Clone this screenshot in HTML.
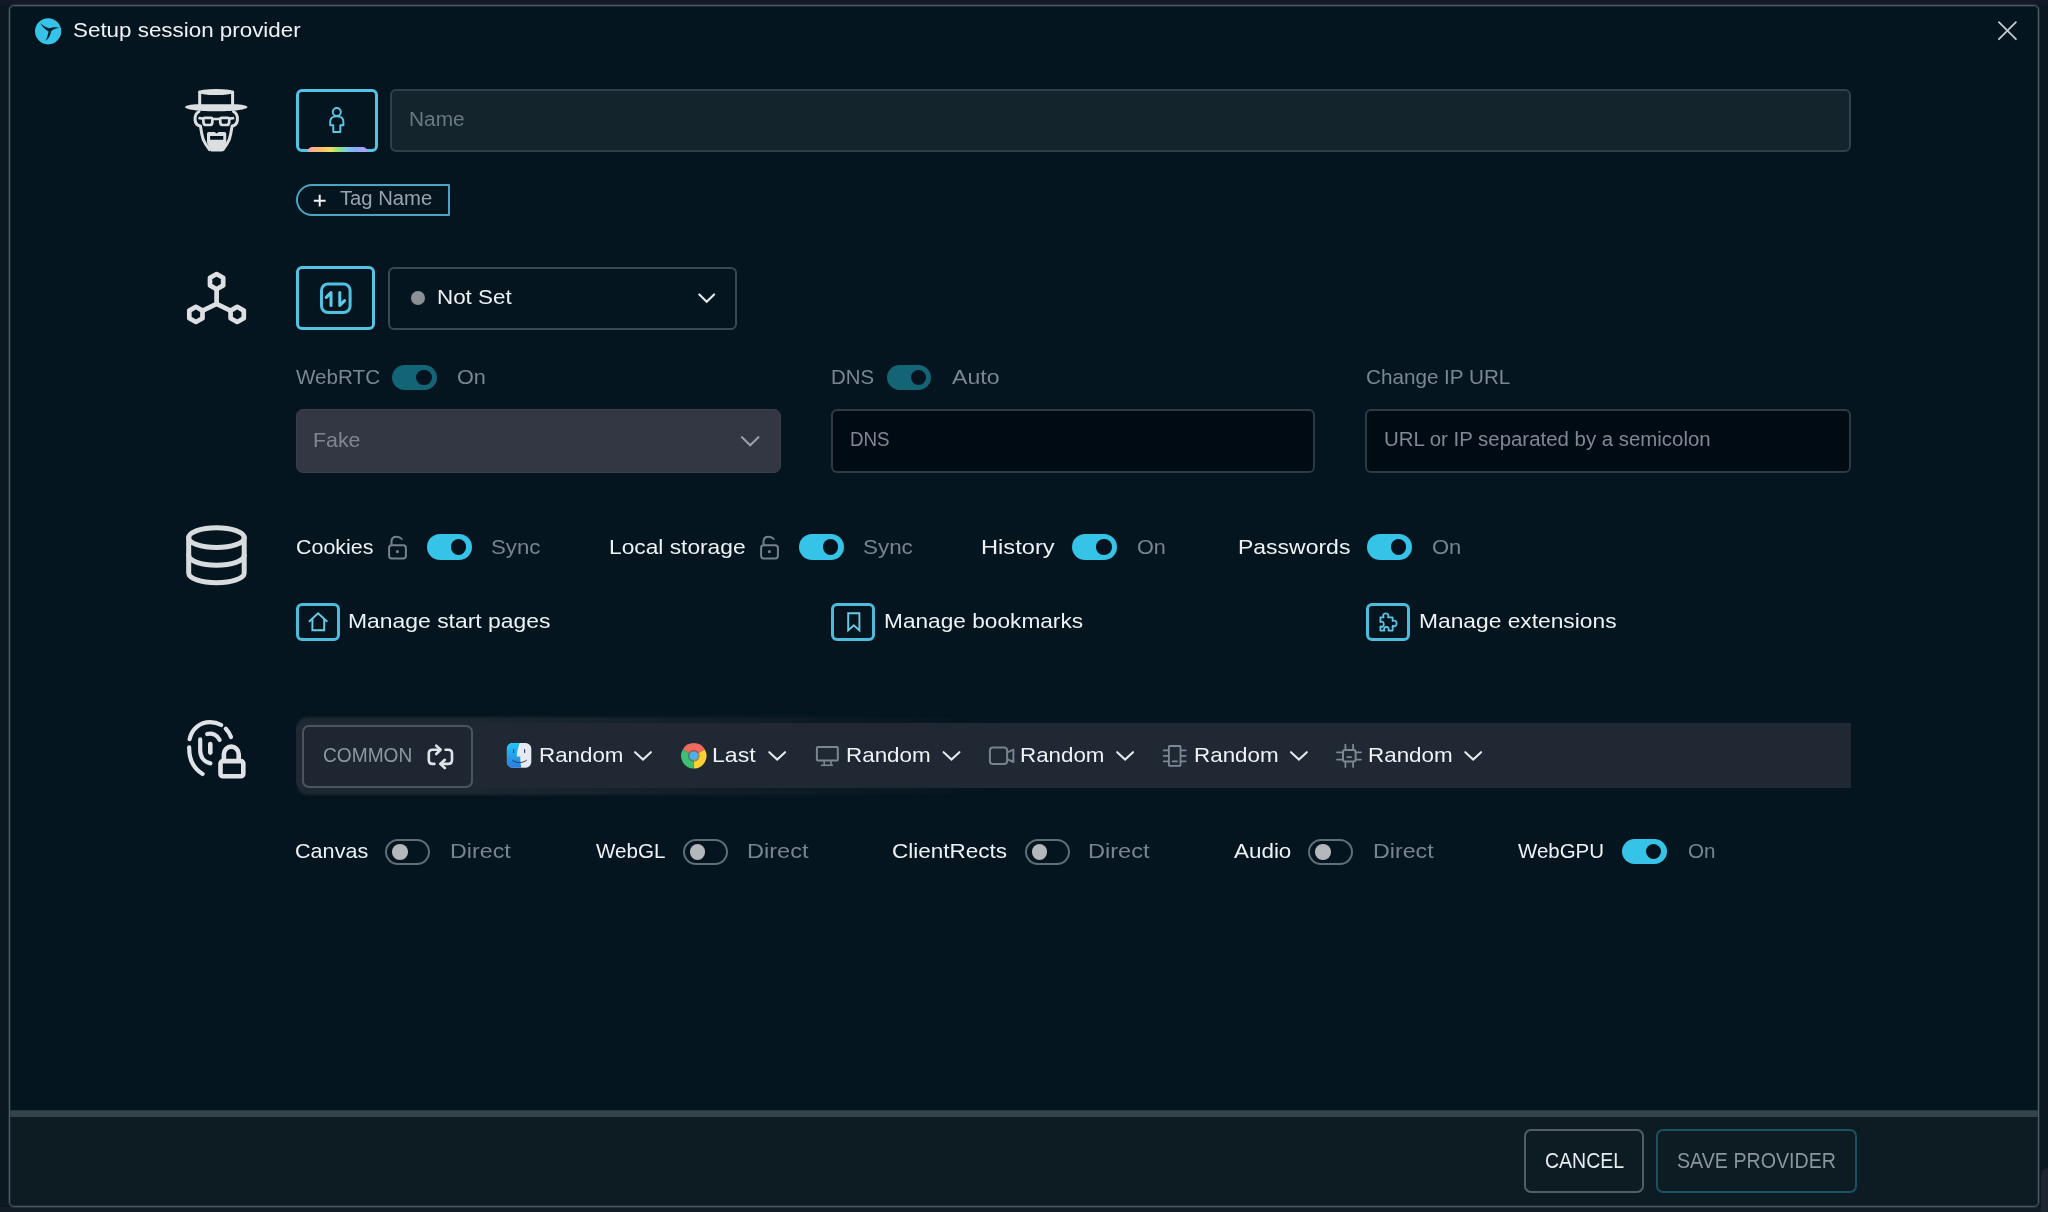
<!DOCTYPE html>
<html lang="en"><head><meta charset="utf-8"><title>Setup session provider</title>
<style>
*{box-sizing:border-box;margin:0;padding:0}
html,body{width:2048px;height:1212px;overflow:hidden}
body{position:relative;background:#0b1821;font-family:"Liberation Sans",sans-serif;-webkit-font-smoothing:antialiased}
.a{position:absolute}
.t{position:absolute;white-space:nowrap;transform-origin:0 0;font-family:"Liberation Sans",sans-serif}
svg{position:absolute;overflow:visible}
#topstrip{left:0;top:0;width:2048px;height:5px;background:#131927}
#botstrip{left:0;top:1207px;width:2048px;height:5px;background:#121c26}
#rb{left:2041px;top:1168px;width:7px;height:44px;background:#1b2630;border-radius:7px 0 0 0}
#dialog{left:9px;top:5px;width:2030px;height:1202px;border:1px solid #4b5961;border-radius:5px;background:#05151f;box-shadow:0 0 0 1px rgba(75,89,97,.33),inset 0 0 0 1px rgba(75,89,97,.3)}
#sep{left:10px;top:1111px;width:2028px;height:6px;background:#35444b;box-shadow:0 -1px 0 #273640}
#foot{left:11px;top:1117px;width:2026px;height:88px;background:#0d1b22;border-radius:0 0 3px 3px}
.ibtn{border:3px solid #53c4e3;border-radius:6px;background:#05151f}
.sbtn{border:3px solid #4cbbdc;border-radius:6px;width:44.4px;height:38px;top:602.8px}
.inp{border:2px solid #2f404a;border-radius:6px}
.tg{width:45px;height:25.6px;border-radius:13px}
.tg i{position:absolute;display:block;border-radius:50%}
.tg.on{background:#35c4e8}
.tg.on i,.tg.dim i{width:15.4px;height:15.4px;left:24.1px;top:5.1px;background:#04131e}
.tg.dim{background:#136474;width:44.5px}
.tg.off{border:2px solid #606e78;height:26px}
.tg.off i{width:15.6px;height:15.6px;left:5px;top:3.2px;background:#b4b7bb}
.btn{border-radius:7px;top:1129.3px;height:63.6px}
#root{position:absolute;left:0;top:0;width:2048px;height:1212px;will-change:transform}

</style></head>
<body>
<div id="root">
<div class="a" id="topstrip"></div>
<div class="a" id="botstrip"></div>
<div class="a" id="rb"></div>
<div class="a" id="dialog"></div>
<div class="a" id="sep"></div>
<div class="a" id="foot"></div>

<!-- logo -->
<svg style="left:34px;top:17px" width="28" height="28" viewBox="0 0 28 28">
  <circle cx="14.1" cy="14.3" r="13.1" fill="#36c3e7"/>
  <path d="M14.6 14.4 C11.5 12.8 8.6 10 6.3 6.2 C9.2 8.6 12.4 10.6 15.2 11.2 C18.6 10 22 9.8 25.6 10.8 C22 11.2 19 12.4 17 14.6 C16.6 18.4 14.8 21.8 11.4 24 C13.2 20.8 13.8 17.6 14.6 14.4 Z" fill="#07202e"/>
</svg>
<!-- close -->
<svg style="left:1997px;top:20px" width="21" height="21" viewBox="1997 20 21 21">
  <path d="M1998.9 22.2 L2015.9 39.2 M2015.9 22.2 L1998.9 39.2" stroke="#c3cbd0" stroke-width="1.8" stroke-linecap="round" fill="none"/>
</svg>

<!-- row 1 -->
<div class="a ibtn" style="left:296px;top:88.6px;width:82.4px;height:63.7px"></div>
<div class="a" style="left:308px;top:146.8px;width:59.4px;height:5.5px;border-radius:5px 5px 2px 2px/5px 5px 1px 1px;background:linear-gradient(90deg,#f6a7a3 0%,#f7c06a 22%,#f2dd5c 38%,#8fe27f 52%,#7ccbe8 66%,#83aef8 80%,#b8a0f6 100%)"></div>
<div class="a inp" style="left:390.2px;top:88.8px;width:1460.8px;height:63.4px;background:#14242d"></div>
<div class="a" style="left:296.1px;top:184.1px;width:154px;height:31.6px;border:2px solid #4aa5c5;border-radius:16px 1px 1px 16px"></div>
<svg style="left:313px;top:194px" width="14" height="14" viewBox="0 0 14 14"><path d="M6.7 0.8 V12.6 M0.8 6.7 H12.6" stroke="#f0f4f6" stroke-width="2" fill="none"/></svg>

<!-- row 2 -->
<div class="a ibtn" style="left:295.8px;top:266px;width:79.6px;height:63.8px;border-radius:6px"></div>
<div class="a inp" style="left:387.6px;top:266.6px;width:349.4px;height:63.2px;border-color:#3a4951"></div>
<div class="a" style="left:411px;top:291.4px;width:13.8px;height:13.8px;border-radius:50%;background:#8b9097"></div>

<!-- row 3 -->
<div class="a tg dim" style="left:392.4px;top:364.7px"><i></i></div>
<div class="a tg dim" style="left:886.8px;top:364.7px"><i></i></div>
<div class="a" style="left:296px;top:409px;width:484.8px;height:64px;background:#333743;border:1px solid #3a3f4b;border-radius:7px"></div>
<div class="a inp" style="left:831.2px;top:409px;width:484px;height:64.2px;background:#010b14;border-color:#2c3b45"></div>
<div class="a inp" style="left:1365.2px;top:409px;width:485.6px;height:64.2px;background:#010b14;border-color:#2c3b45"></div>

<!-- row 4 -->
<div class="a tg on" style="left:427px;top:534.4px"><i></i></div>
<div class="a tg on" style="left:799px;top:534.4px"><i></i></div>
<div class="a tg on" style="left:1072.4px;top:534.4px"><i></i></div>
<div class="a tg on" style="left:1367px;top:534.4px"><i></i></div>
<div class="a sbtn" style="left:295.8px"></div>
<div class="a sbtn" style="left:831.1px"></div>
<div class="a sbtn" style="left:1365.9px"></div>

<!-- toolbar -->
<div class="a" style="left:296.5px;top:717.3px;width:700px;height:78px;border-radius:10px 0 0 10px;filter:blur(1.2px);background:linear-gradient(90deg,#1d2730 0%,#1d2730 26%,rgba(29,39,48,0) 100%)"></div>
<div class="a" style="left:296px;top:722.8px;width:1555px;height:65.4px;background:#1f2833;border-radius:6px 0 0 6px"></div>
<div class="a" style="left:302.2px;top:724.8px;width:171px;height:63.6px;border:2px solid #4b555e;border-radius:7px;background:#1e2731"></div>

<!-- row 6 -->
<div class="a tg off" style="left:385.1px;top:838.9px"><i></i></div>
<div class="a tg off" style="left:682.7px;top:838.9px"><i></i></div>
<div class="a tg off" style="left:1024.5px;top:838.9px"><i></i></div>
<div class="a tg off" style="left:1308.3px;top:838.9px"><i></i></div>
<div class="a tg on" style="left:1621.8px;top:838.8px"><i></i></div>

<!-- footer buttons -->
<div class="a btn" style="left:1523.8px;width:120.6px;border:2px solid #535d63"></div>
<div class="a btn" style="left:1656.4px;width:201px;border:2px solid #195264"></div>

<!--ICONS_START-->
<!-- heisenberg -->
<svg style="left:176px;top:80px" width="80" height="80" viewBox="0 0 80 80">
  <g fill="none" stroke="#dcdfe1" stroke-width="3" stroke-linejoin="round" stroke-linecap="round">
    <path d="M23.7 25 V12 M56.6 25 V12"/>
    <path d="M23 31.5 C20.2 33 18.8 36.5 19.1 40 C19.4 43.6 21.6 45.6 24.4 46 L25.8 54 C26.4 58 27.6 61 29.6 64 L33.5 69.6"/>
    <path d="M57.5 31.5 C60.3 33 61.7 36.5 61.4 40 C61.1 43.6 58.9 45.6 56.1 46 L54.7 54 C54.1 58 52.9 61 50.9 64 L47 69.6"/>
  </g>
  <ellipse cx="40.15" cy="12" rx="18" ry="3.1" fill="#dcdfe1"/>
  <path d="M8.9 27 C9.8 24.7 18 24.2 25 24.2 L55.5 24.2 C62.5 24.2 70.7 24.7 71.6 27 C70.2 30.3 54 31.3 40.2 31.3 C26.4 31.3 10.3 30.3 8.9 27 Z" fill="#dcdfe1"/>
  <g fill="none" stroke="#dcdfe1" stroke-width="2.7" stroke-linejoin="round">
    <path d="M28.9 37.8 H35 Q36.5 37.8 36.4 39.3 L36.3 42.6 Q36.2 45 33.8 45 H30.2 Q27.6 45 27.5 42.6 L27.3 39.3 Q27.3 37.8 28.9 37.8 Z"/>
    <path d="M51.7 37.8 H45.6 Q44.1 37.8 44.2 39.3 L44.3 42.6 Q44.4 45 46.8 45 H50.4 Q53 45 53.1 42.6 L53.3 39.3 Q53.3 37.8 51.7 37.8 Z"/>
    <path d="M36.4 39 H44.2 M27.3 38.6 L22.4 38 M53.3 38.6 L58.2 38"/>
  </g>
  <path fill-rule="evenodd" fill="#dcdfe1" d="M31 53.6 Q31 52 32.8 52 L38.6 52 L40.6 53.4 L42.6 52 L48.4 52 Q50.2 52 50.2 53.6 L50.2 62.4 L46.4 71.4 L34.9 71.4 L31 62.4 Z M34.1 56 L34.1 59.8 L47.3 59.8 L47.3 56 Z"/>
</svg>
<!-- person -->
<svg style="left:320px;top:100px" width="36" height="40" viewBox="320 100 36 40">
  <g fill="none" stroke="#5cc7e6" stroke-width="1.9" stroke-linejoin="round">
    <circle cx="336.8" cy="112" r="4"/>
    <path d="M330.2 125.2 V121.6 C330.2 118.2 333 116.4 336.8 116.4 C340.6 116.4 343.4 118.2 343.4 121.6 V125.2 H340.3 V132 H333.3 V125.2 Z"/>
  </g>
</svg>
<!-- network -->
<svg style="left:176px;top:258px" width="80" height="80" viewBox="176 258 80 80">
  <g fill="none" stroke="#dde0e3" stroke-width="4.7" stroke-linejoin="round" stroke-linecap="round">
    <path d="M216.6 274 L223.2 277.8 V285.4 L216.6 289.2 L210 285.4 V277.8 Z"/>
    <path d="M195.9 306.8 L202.5 310.6 V318.2 L195.9 322 L189.3 318.2 V310.6 Z"/>
    <path d="M237.2 306.8 L243.8 310.6 V318.2 L237.2 322 L230.6 318.2 V310.6 Z"/>
    <path d="M216.6 289.4 V303.8 L202.7 310.6 M216.6 303.8 L230.4 310.6"/>
  </g>
</svg>
<!-- arrows in rounded square -->
<svg style="left:316px;top:278px" width="40" height="40" viewBox="316 278 40 40">
  <rect x="321.5" y="284" width="28.6" height="28.5" rx="6.5" fill="none" stroke="#4fc2e2" stroke-width="3"/>
  <g fill="none" stroke="#5ccbea" stroke-width="3" stroke-linecap="round" stroke-linejoin="round">
    <path d="M326.2 297.4 L331 292.6 V305.4"/>
    <path d="M339.8 292.6 V305.4 L344.6 300.6"/>
  </g>
</svg>
<!-- chevrons -->
<svg style="left:0;top:0" width="2048" height="1212" viewBox="0 0 2048 1212">
  <g fill="none" stroke="#e4e9ed" stroke-width="2.1" stroke-linecap="round" stroke-linejoin="miter">
    <path d="M699.3 294.4 L706.7 301.8 L714.1 294.4"/>
    <path d="M635.1 752.2 L643 759.6 L650.9 752.2"/>
    <path d="M769.3 752.2 L777.2 759.6 L785.1 752.2"/>
    <path d="M943.6 752.2 L951.5 759.6 L959.4 752.2"/>
    <path d="M1117.2 752.2 L1125.1 759.6 L1133 752.2"/>
    <path d="M1291 752.2 L1298.9 759.6 L1306.8 752.2"/>
    <path d="M1465.3 752.2 L1473.2 759.6 L1481.1 752.2"/>
  </g>
  <path d="M742 437.2 L750.2 445.2 L758.4 437.2" fill="none" stroke="#9aa0a8" stroke-width="2.1" stroke-linecap="round"/>
</svg>
<!-- database -->
<svg style="left:176px;top:510px" width="80" height="84" viewBox="176 510 80 84">
  <g fill="none" stroke="#d9dcdf" stroke-width="5" stroke-linecap="round">
    <ellipse cx="216.45" cy="537.7" rx="27.75" ry="9.9"/>
    <path d="M188.7 537.7 V572.9 A27.75 9.9 0 0 0 244.2 572.9 V537.7"/>
    <path d="M188.7 555.3 A27.75 9.9 0 0 0 244.2 555.3"/>
  </g>
</svg>
<!-- locks -->
<svg style="left:380px;top:528px" width="40" height="40" viewBox="0 0 40 40">
  <g id="ulock" fill="none" stroke="#74818b" stroke-width="2" stroke-linecap="round">
    <rect x="9.1" y="17.3" width="16.8" height="13.1" rx="2.6"/>
    <path d="M11.5 17 V13.6 C11.5 10.6 13.6 8.7 16.6 8.7 C18.9 8.7 20.7 9.6 21.8 11"/>
    <circle cx="17.4" cy="23.6" r="0.9" fill="#9aa6ae" stroke-width="1.4"/>
  </g>
</svg>
<svg style="left:751.6px;top:528px" width="40" height="40" viewBox="0 0 40 40">
  <g fill="none" stroke="#74818b" stroke-width="2" stroke-linecap="round">
    <rect x="9.1" y="17.3" width="16.8" height="13.1" rx="2.6"/>
    <path d="M11.5 17 V13.6 C11.5 10.6 13.6 8.7 16.6 8.7 C18.9 8.7 20.7 9.6 21.8 11"/>
    <circle cx="17.4" cy="23.6" r="0.9" fill="#9aa6ae" stroke-width="1.4"/>
  </g>
</svg>
<!-- home / bookmark / puzzle -->
<svg style="left:300px;top:606px" width="36" height="32" viewBox="300 606 36 32">
  <g fill="none" stroke="#6ccbe4" stroke-width="1.9" stroke-linejoin="miter" stroke-linecap="butt">
    <path d="M308.9 621.8 L318.1 613.2 L327.3 621.8"/>
    <path d="M312.4 619 V630.2 H324.2 V619"/>
  </g>
</svg>
<svg style="left:836px;top:606px" width="36" height="32" viewBox="836 606 36 32">
  <path d="M848.2 613.2 H859.4 V630.4 L853.8 625.2 L848.2 630.4 Z" fill="none" stroke="#6ccbe4" stroke-width="1.9" stroke-linejoin="miter"/>
</svg>
<svg style="left:1370px;top:606px" width="36" height="32" viewBox="1370 606 36 32">
  <path d="M1380.4 617.4 H1383.6 C1382.4 615 1383.6 613.3 1385.8 613.3 C1388 613.3 1389.2 615 1388 617.4 H1392.6 V621 C1395 619.8 1396.6 621.2 1396.6 623.4 C1396.6 625.6 1395 627 1392.6 625.8 V630.6 H1388.4 C1389.4 628.6 1388.2 627 1386.4 627 C1384.6 627 1383.4 628.6 1384.4 630.6 H1380.4 V626.4 C1382.4 627.4 1383.8 626.2 1383.8 624.2 C1383.8 622.2 1382.4 621 1380.4 622 Z" fill="none" stroke="#5cc3e0" stroke-width="1.8" stroke-linejoin="round"/>
</svg>
<!-- fingerprint + lock -->
<svg style="left:176px;top:710px" width="80" height="80" viewBox="0 0 80 80">
  <g fill="none" stroke="#dfe3e7" stroke-width="4.2" stroke-linecap="round">
    <path d="M13.6 29.2 C15.6 19 24 12.2 34 12.2 C38.2 12.2 42 13.2 45.2 15"/>
    <path d="M49.8 18.8 C52 21 53.8 23.8 55 27"/>
    <path d="M13.2 37.4 C13 49 17.6 58.4 26.6 64"/>
    <path d="M24.2 29.4 V40 C24.2 47 28 52 34.4 53.4"/>
    <path d="M31.2 24 C36.4 22.6 41.4 25.2 43.6 29.8"/>
    <path d="M34.3 34 V42.6" stroke-width="4.6"/>
  </g>
  <g fill="none" stroke="#05151f" stroke-width="9.4" stroke-linejoin="round">
    <rect x="44.5" y="51.1" width="22.8" height="15.2" rx="2.4"/>
    <path d="M47.9 50 V44 A7.4 7.4 0 0 1 62.7 44 V50"/>
  </g>
  <g fill="none" stroke="#dfe3e7" stroke-width="4.6" stroke-linejoin="round">
    <rect x="44.5" y="51.1" width="22.8" height="15.2" rx="2.4" fill="#05151f"/>
    <path d="M47.9 50 V44 A7.4 7.4 0 0 1 62.7 44 V50"/>
  </g>
</svg>
<!-- cycle -->
<svg style="left:420px;top:740px" width="40" height="34" viewBox="420 740 40 34">
  <g fill="none" stroke="#dfe4ea" stroke-width="2.6" stroke-linecap="round" stroke-linejoin="round">
    <path d="M434.4 763.9 H432.6 Q428.8 763.9 428.8 760.1 V753.5 Q428.8 749.7 432.6 749.7 H440"/>
    <path d="M436.2 745.6 L440.6 749.7 L436.2 754"/>
    <path d="M445.6 749.7 H448.2 Q452 749.7 452 753.5 V760.1 Q452 763.9 448.2 763.9 H440.6"/>
    <path d="M444.8 759.8 L440.4 763.9 L444.8 768"/>
  </g>
</svg>
<!-- finder -->
<svg style="left:506px;top:742px" width="27" height="27" viewBox="0 0 27 27">
  <defs>
    <linearGradient id="fb" x1="0" y1="0" x2="0" y2="1"><stop offset="0" stop-color="#1fcbfa"/><stop offset="1" stop-color="#2a78de"/></linearGradient>
    <clipPath id="fc"><rect x="0.9" y="1.1" width="24.4" height="24.6" rx="5.6"/></clipPath>
  </defs>
  <g clip-path="url(#fc)">
    <rect x="0" y="0" width="27" height="27" fill="#e6eaf3"/>
    <path d="M0 0 H14 C12.2 5 11 9.6 10.8 14.4 H14.2 C14.2 18.6 14.6 22.6 15.6 27 H0 Z" fill="url(#fb)"/>
    <path d="M6.6 18.4 C10.6 21.4 16.4 21.4 20.4 18.4" fill="none" stroke="#2c3a55" stroke-width="1" stroke-linecap="round"/>
    <path d="M7.6 7.6 V10.4 M18.6 7.6 V10.4" stroke="#2c3a55" stroke-width="1.1" stroke-linecap="round"/>
  </g>
</svg>
<!-- chrome -->
<svg style="left:680px;top:742px" width="28" height="28" viewBox="-14 -14 28 28">
  <g transform="translate(-0.2 -0.2)">
    <path d="M0 0 L-11 -6.35 A12.7 12.7 0 0 1 11 -6.35 Z" fill="#ee6a5c"/>
    <path d="M0 0 L11 -6.35 A12.7 12.7 0 0 1 0 12.7 Z" fill="#fccf35"/>
    <path d="M0 0 L0 12.7 A12.7 12.7 0 0 1 -11 -6.35 Z" fill="#3fbf74"/>
    <circle r="5.8" fill="#1f2833" opacity="0.55"/>
    <circle r="5.4" fill="#e9eef3" opacity="0.25"/>
    <circle r="4" fill="#4fb0ef"/>
  </g>
</svg>
<!-- monitor -->
<svg style="left:812px;top:742px" width="30" height="28" viewBox="812 742 30 28">
  <g fill="none" stroke="#7b8790" stroke-width="2" stroke-linejoin="round">
    <rect x="816.9" y="746.9" width="20.9" height="13.7" rx="0.8"/>
    <path d="M824.2 761 V765 M831 761 V765" stroke-width="1.6"/>
    <path d="M821 765.3 H833" stroke-width="1.6"/>
  </g>
</svg>
<!-- camera -->
<svg style="left:985px;top:742px" width="32" height="28" viewBox="985 742 32 28">
  <g fill="none" stroke="#76828c" stroke-width="2" stroke-linejoin="round">
    <rect x="989.9" y="747.6" width="17.2" height="16.4" rx="3"/>
    <path d="M1007.2 752.4 L1013.4 749.6 V762 L1007.2 759.2"/>
  </g>
</svg>
<!-- memory -->
<svg style="left:1160px;top:742px" width="30" height="28" viewBox="1160 742 30 28">
  <g fill="none" stroke="#7c8893" stroke-width="1.8">
    <rect x="1168.9" y="746" width="11.6" height="19.8" rx="0.6"/>
    <path d="M1163.8 750.4 H1168.4 M1163.8 755.9 H1168.4 M1163.8 761.4 H1168.4 M1181 750.4 H1185.6 M1181 755.9 H1185.6 M1181 761.4 H1185.6 M1172.6 761.4 H1177" stroke-linecap="round"/>
  </g>
</svg>
<!-- cpu -->
<svg style="left:1334px;top:742px" width="30" height="28" viewBox="1334 742 30 28">
  <g fill="none" stroke="#7c8893" stroke-width="2" stroke-linecap="round">
    <rect x="1343" y="749.9" width="12.6" height="11.5" rx="2"/>
    <path d="M1345.4 744.6 V749 M1353.1 744.6 V749 M1345.4 762.4 V767 M1353.1 762.4 V767 M1337 752.3 H1342 M1337 759.6 H1342 M1356.6 752.3 H1361 M1356.6 759.6 H1361 M1347.4 757.1 H1351.2" stroke-width="1.8"/>
  </g>
</svg>

<!--ICONS_END-->
<div class="t" style="left:73.19px;top:19.00px;font-size:21px;line-height:21px;transform:scaleX(1.0659);color:#eef2f5">Setup session provider</div>
<div class="t" style="left:409.35px;top:109.00px;font-size:20px;line-height:20px;transform:scaleX(1.0421);color:#6b7882">Name</div>
<div class="t" style="left:340.20px;top:188.00px;font-size:20px;line-height:20px;transform:scaleX(1.0118);color:#99a5ad">Tag Name</div>
<div class="t" style="left:436.72px;top:286.00px;font-size:21px;line-height:21px;transform:scaleX(1.0658);color:#eef2f5">Not Set</div>
<div class="t" style="left:296.28px;top:366.00px;font-size:21px;line-height:21px;transform:scaleX(0.9820);color:#7a8791">WebRTC</div>
<div class="t" style="left:457.12px;top:366.00px;font-size:21px;line-height:21px;transform:scaleX(1.0319);color:#7a8791">On</div>
<div class="t" style="left:830.58px;top:366.00px;font-size:21px;line-height:21px;transform:scaleX(0.9688);color:#7a8791">DNS</div>
<div class="t" style="left:951.94px;top:366.00px;font-size:21px;line-height:21px;transform:scaleX(1.0987);color:#7a8791">Auto</div>
<div class="t" style="left:1365.53px;top:366.00px;font-size:21px;line-height:21px;transform:scaleX(0.9838);color:#7a8791">Change IP URL</div>
<div class="t" style="left:312.64px;top:429.00px;font-size:21px;line-height:21px;transform:scaleX(1.0171);color:#80868f">Fake</div>
<div class="t" style="left:850.18px;top:429.00px;font-size:20px;line-height:20px;transform:scaleX(0.9383);color:#7e8993">DNS</div>
<div class="t" style="left:1383.76px;top:429.00px;font-size:20px;line-height:20px;transform:scaleX(1.0202);color:#7e8993">URL or IP separated by a semicolon</div>
<div class="t" style="left:295.70px;top:536.00px;font-size:21px;line-height:21px;transform:scaleX(1.0203);color:#eef2f5">Cookies</div>
<div class="t" style="left:490.97px;top:536.00px;font-size:21px;line-height:21px;transform:scaleX(1.0588);color:#788590">Sync</div>
<div class="t" style="left:608.59px;top:536.00px;font-size:21px;line-height:21px;transform:scaleX(1.0832);color:#eef2f5">Local storage</div>
<div class="t" style="left:862.86px;top:536.00px;font-size:21px;line-height:21px;transform:scaleX(1.0665);color:#788590">Sync</div>
<div class="t" style="left:980.82px;top:536.00px;font-size:21px;line-height:21px;transform:scaleX(1.1264);color:#eef2f5">History</div>
<div class="t" style="left:1137.12px;top:536.00px;font-size:21px;line-height:21px;transform:scaleX(1.0319);color:#788590">On</div>
<div class="t" style="left:1237.65px;top:536.00px;font-size:21px;line-height:21px;transform:scaleX(1.0942);color:#eef2f5">Passwords</div>
<div class="t" style="left:1432.02px;top:536.00px;font-size:21px;line-height:21px;transform:scaleX(1.0469);color:#788590">On</div>
<div class="t" style="left:347.96px;top:610.00px;font-size:21px;line-height:21px;transform:scaleX(1.0906);color:#eef2f5">Manage start pages</div>
<div class="t" style="left:884.08px;top:610.00px;font-size:21px;line-height:21px;transform:scaleX(1.0795);color:#eef2f5">Manage bookmarks</div>
<div class="t" style="left:1419.41px;top:610.00px;font-size:21px;line-height:21px;transform:scaleX(1.0846);color:#eef2f5">Manage extensions</div>
<div class="t" style="left:323.16px;top:745.00px;font-size:20px;line-height:20px;transform:scaleX(0.9571);color:#8c979f">COMMON</div>
<div class="t" style="left:538.72px;top:744.00px;font-size:21px;line-height:21px;transform:scaleX(1.0639);color:#eef2f5">Random</div>
<div class="t" style="left:711.74px;top:744.00px;font-size:21px;line-height:21px;transform:scaleX(1.0984);color:#eef2f5">Last</div>
<div class="t" style="left:846.06px;top:744.00px;font-size:21px;line-height:21px;transform:scaleX(1.0669);color:#eef2f5">Random</div>
<div class="t" style="left:1020.14px;top:744.00px;font-size:21px;line-height:21px;transform:scaleX(1.0638);color:#eef2f5">Random</div>
<div class="t" style="left:1194.32px;top:744.00px;font-size:21px;line-height:21px;transform:scaleX(1.0664);color:#eef2f5">Random</div>
<div class="t" style="left:1367.72px;top:744.00px;font-size:21px;line-height:21px;transform:scaleX(1.0667);color:#eef2f5">Random</div>
<div class="t" style="left:295.09px;top:840.00px;font-size:21px;line-height:21px;transform:scaleX(1.0286);color:#eef2f5">Canvas</div>
<div class="t" style="left:450.33px;top:840.00px;font-size:21px;line-height:21px;transform:scaleX(1.1075);color:#788590">Direct</div>
<div class="t" style="left:596.00px;top:840.00px;font-size:21px;line-height:21px;transform:scaleX(0.9815);color:#eef2f5">WebGL</div>
<div class="t" style="left:746.71px;top:840.00px;font-size:21px;line-height:21px;transform:scaleX(1.1222);color:#788590">Direct</div>
<div class="t" style="left:892.07px;top:840.00px;font-size:21px;line-height:21px;transform:scaleX(1.0722);color:#eef2f5">ClientRects</div>
<div class="t" style="left:1088.32px;top:840.00px;font-size:21px;line-height:21px;transform:scaleX(1.1229);color:#788590">Direct</div>
<div class="t" style="left:1234.20px;top:840.00px;font-size:21px;line-height:21px;transform:scaleX(1.0673);color:#eef2f5">Audio</div>
<div class="t" style="left:1372.72px;top:840.00px;font-size:21px;line-height:21px;transform:scaleX(1.1070);color:#788590">Direct</div>
<div class="t" style="left:1518.26px;top:840.00px;font-size:21px;line-height:21px;transform:scaleX(0.9736);color:#eef2f5">WebGPU</div>
<div class="t" style="left:1688.27px;top:840.00px;font-size:21px;line-height:21px;transform:scaleX(0.9807);color:#788590">On</div>
<div class="t" style="left:1544.73px;top:1150.00px;font-size:22px;line-height:22px;transform:scaleX(0.8872);color:#e6ebee">CANCEL</div>
<div class="t" style="left:1677.44px;top:1150.00px;font-size:22px;line-height:22px;transform:scaleX(0.8924);color:#8a959d">SAVE PROVIDER</div>

</div>
</body></html>
